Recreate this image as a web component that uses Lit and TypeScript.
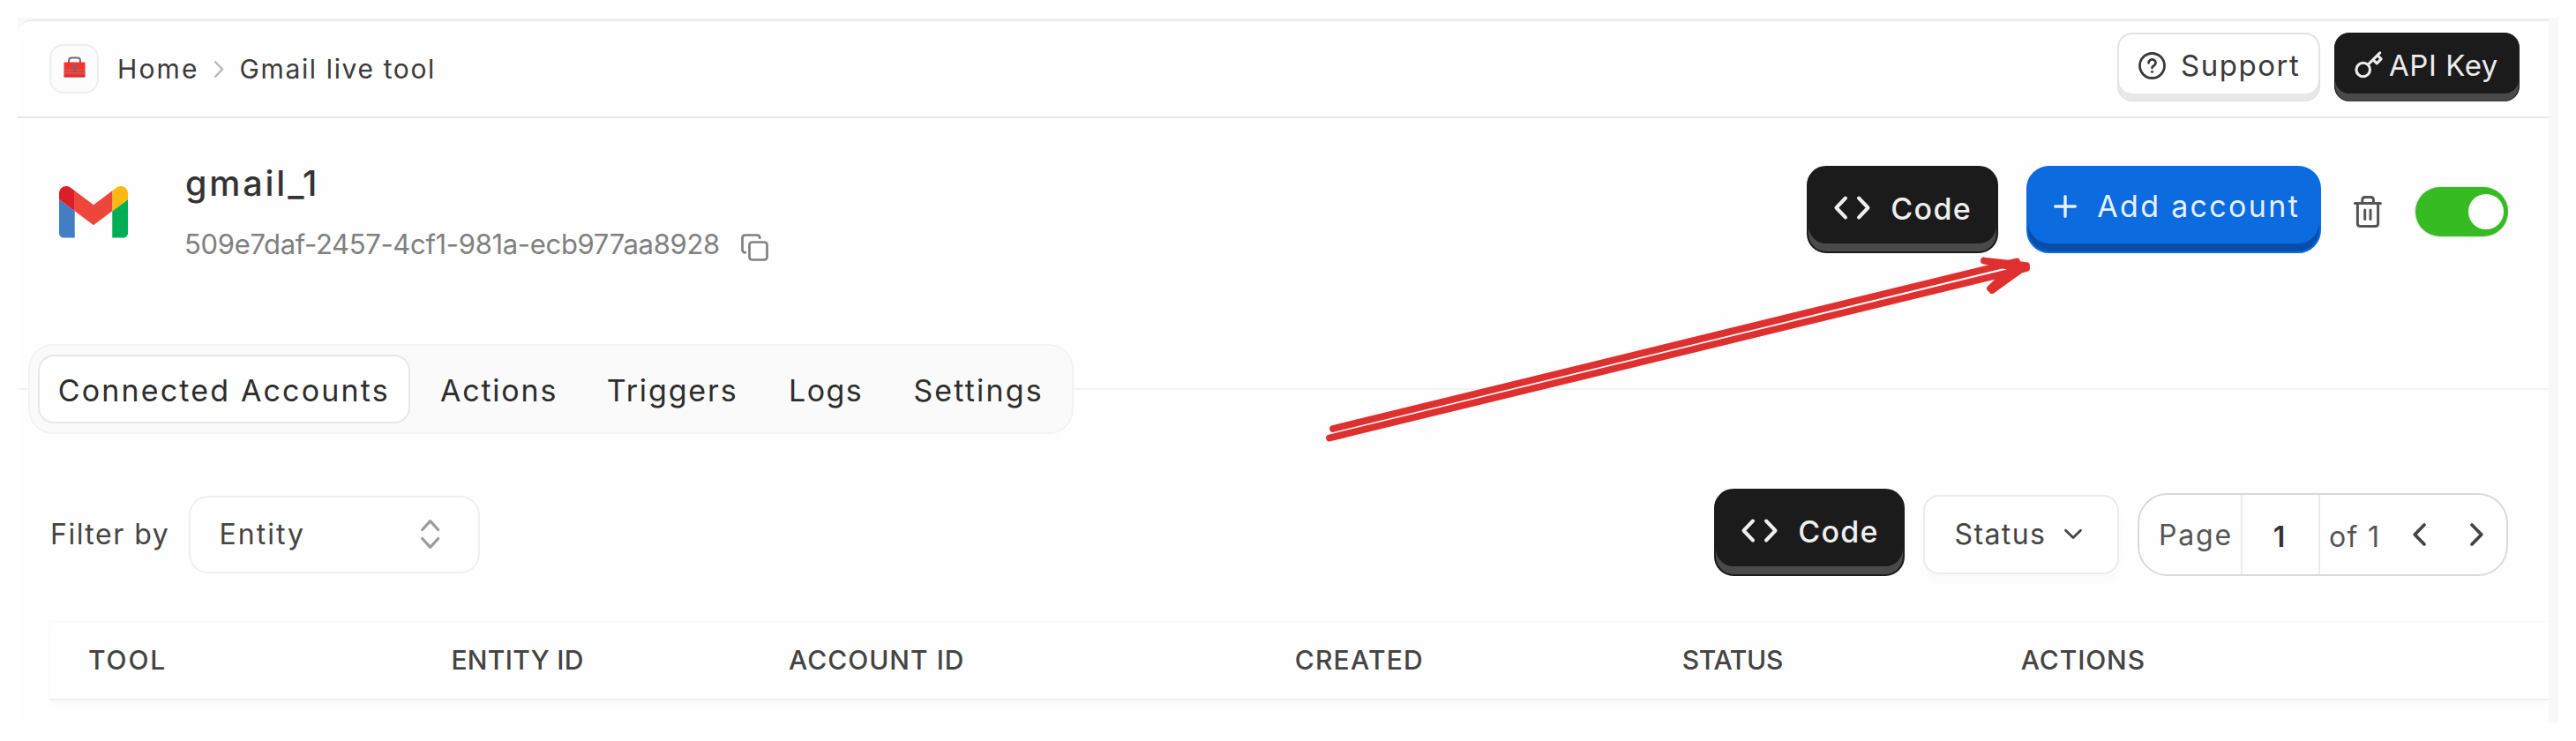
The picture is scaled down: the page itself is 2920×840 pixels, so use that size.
import { LitElement, html, css, svg } from "lit";
import { customElement } from "lit/decorators.js";

const codeIcon = () => html`<svg class="code-icon" width="41" height="27" viewBox="0 0 41 27" fill="none" stroke="currentColor" stroke-width="4" stroke-linecap="round" stroke-linejoin="round"><path d="M13 2.5 2.500 13.500 13 24.500M28 2.500l10.500 11L28 24.500" /></svg>`;

const chevron = (cls: string, w: number, h: number, d: string, sw: number) =>
  html`<svg class=${cls} width=${w} height=${h} viewBox="0 0 ${w} ${h}" fill="none" stroke="currentColor" stroke-width=${sw} stroke-linecap="round" stroke-linejoin="round">${svg`<path d=${d} />`}</svg>`;

@customElement("app-root")
export class AppRoot extends LitElement {
  static styles = css`
    :host {
      display: block;
      box-sizing: border-box;
      width: 2920px;
      height: 840px;
      padding: 20px;
      background: #fff;
      overflow: hidden;
      position: relative;
      font-family: Inter, "Liberation Sans", sans-serif;
      color: #444;
      white-space: nowrap;
    }
    *, *::before, *::after { box-sizing: border-box; }
    svg { display: block; flex: none; overflow: visible; }
    .frame { width: 2880px; height: 800px; padding: 2px 11px 0 0; background: #f8f8f8; }
    .panel { height: 798px; background: #fefefe; border-top-left-radius: 16px; overflow: hidden; }

    /* top bar */
    .topbar {
      display: flex; align-items: center; height: 112px; padding: 0 33px 0 36px;
      border-top: 2px solid #e9e9e9; border-bottom: 2px solid #e7e7e7; border-top-left-radius: 16px;
    }
    .home-logo {
      display: flex; align-items: center; justify-content: center; width: 56px; height: 56px;
      border: 2px solid #eee; border-radius: 16px; background: #fcfcfc; padding-bottom: 5px;
    }
    .crumb { font-size: 30px; line-height: 40px; color: #3a3a3a; }
    .crumb-home { margin-left: 21px; letter-spacing: 2.15px; }
    .crumb-sep { margin-left: 17.3px; color: #b5b5b5; }
    .crumb-here { margin-left: 18.5px; letter-spacing: 1.64px; }
    .btn { display: flex; align-items: center; flex: none; line-height: 40px; }
    .support {
      width: 230px; height: 78px; margin: 0 16px 5px auto; padding: 0 0 3px 22.4px;
      border: 2px solid #e3e3e3; border-radius: 17px; background: #fff; color: #3a3a3a;
      box-shadow: inset 0 -7px 0 #e8e8e8; font-size: 33px; letter-spacing: 1.51px;
    }
    .support span { margin-left: 16.7px; }
    .apikey {
      width: 210px; height: 78px; margin-bottom: 5px; padding: 0 0 3px 21px;
      border: 1px solid #1b1b1b; border-bottom-color: #3c3c3c; border-radius: 17px; background: #1b1b1b; color: #ececec;
      box-shadow: inset 0 -8px 0 #4a4a4a; font-size: 33px; letter-spacing: .56px;
    }
    .apikey span { margin-left: 6px; }

    /* tool summary */
    .summary { display: flex; align-items: center; height: 212px; padding: 0 46.5px; }
    .identity { margin-left: 65.5px; }
    .name { font-size: 39.5px; font-weight: 500; line-height: 48px; letter-spacing: 2.8px; color: #333; padding-top: 1px; }
    .uid { display: flex; align-items: center; height: 40px; margin: 24.5px 0 0 -1px; font-size: 31px; letter-spacing: -.33px; color: #808080; }
    .uid svg { margin: 8px 0 0 24.2px; }
    .dark {
      width: 216.7px; height: 99.3px; padding: 0 0 3px 29.5px; border: 2px solid #1b1b1b; border-radius: 22px;
      background: #1b1b1b; box-shadow: inset 0 -9px 0 #4a4a4a; color: #efefef; font-size: 34px; font-weight: 500; letter-spacing: 1.3px;
    }
    .dark svg { margin-bottom: 1px; }
    .dark span { margin-left: 23px; padding-top: 2px; }
    .summary .dark { margin: 0 32.3px 5.4px auto; }
    .add {
      width: 334.4px; height: 99.3px; margin-bottom: 5.4px; padding: 0 0 6px 29px; border: 2px solid #0b6bdf; border-radius: 26px;
      background: #0b6bdf; box-shadow: inset 0 -9px 0 #054fab; color: #e6f0ff; font-size: 34px; letter-spacing: 2.33px;
    }
    .add span { margin-left: 23.4px; }
    .trash { margin-left: 36.3px; color: #555; }
    .toggle {
      display: flex; align-items: center; justify-content: flex-end; width: 104.5px; height: 56px; margin-left: 38.5px;
      padding-right: 5px; border-radius: 28px; background: #36bb22; box-shadow: 0 0 3px rgba(40, 60, 40, .25);
    }
    .knob { width: 39.5px; height: 39.5px; border-radius: 50%; background: #fff; }

    /* tabs */
    .tabrow { display: flex; align-items: center; margin-top: 44px; }
    .rule { height: 2px; background: #f3f3f3; }
    .rule-start { width: 12px; }
    .rule-end { flex: 1; }
    .tabs {
      display: flex; align-items: center; width: 1185px; height: 101.7px; padding-left: 9.3px;
      border: 2px solid #f3f3f3; border-radius: 28px; background: #fafafa; color: #2d2d2d; font-size: 34px;
    }
    .tab { flex: none; height: 77.7px; padding: 4px 0 0 33.7px; line-height: 74.7px; }
    .tab-accounts { width: 422px; padding: 2px 0 0 20.5px; border: 2px solid #e8e8e8; border-radius: 18px; background: #fff; letter-spacing: 2.15px; }
    .tab-actions { width: 188.8px; letter-spacing: 1.78px; }
    .tab-triggers { width: 206.3px; letter-spacing: 1.86px; }
    .tab-logs { width: 141.3px; letter-spacing: 1.38px; }
    .tab-settings { letter-spacing: 2.17px; }

    /* filters */
    .filters { display: flex; align-items: center; height: 100px; margin-top: 64.3px; padding: 0 45.6px 0 37px; font-size: 32px; }
    .filter-label { width: 157.3px; letter-spacing: 1.5px; }
    .select {
      display: flex; align-items: center; justify-content: space-between; width: 329.4px; height: 88.6px; padding: 0 43.7px 0 32.3px;
      border: 2px solid #efefef; border-radius: 22px; letter-spacing: 1.99px;
    }
    .select svg { color: #9b9b9b; }
    .filters .dark { margin: 0 21px 5.6px auto; }
    .status {
      display: flex; align-items: center; justify-content: space-between; width: 221.7px; height: 89.3px; padding: 0 40px 0 33.2px; margin-right: 20.5px;
      border: 2px solid #ebebeb; border-radius: 18px; background: #fff; box-shadow: 0 8px 12px rgba(0, 0, 0, .02); letter-spacing: 1.4px;
    }
    .pager {
      display: flex; align-items: center; width: 420.9px; height: 93.4px; border: 2.5px solid #d9d9d9; border-radius: 34px; color: #555; overflow: hidden;
    }
    .cell { display: flex; flex: none; align-items: center; height: 100%; border-right: 2px solid #ececec; }
    .cell-label { width: 117px; padding: 2px 0 0 22.5px; letter-spacing: 1.79px; }
    .cell-num { width: 88px; padding: 6px 2px 0 0; justify-content: center; font-weight: 600; color: #333; }
    .of { margin: 6px 0 0 10.5px; letter-spacing: 1.3px; }
    .prev { margin-left: auto; color: #444; }
    .next { margin: 0 26px 0 50.5px; color: #444; }

    /* table header */
    .thead {
      display: grid; grid-template-columns: 411.4px 382.6px 573.7px 439px 384px 1fr; align-items: center; height: 90px;
      margin: 48px 0 0 36px; padding: 0 0 1px 43px; border: 1px solid #fafafa; border-right: 0; border-bottom: 2px solid #f0f0f0;
      box-shadow: 0 4px 6px rgba(0, 0, 0, .025); font-size: 30px; font-weight: 500; color: #444;
    }
    .c-tool { letter-spacing: 1.9px; }
    .c-entity { letter-spacing: .35px; }
    .c-account { letter-spacing: 1px; }
    .c-created { letter-spacing: 1.25px; }
    .c-status { letter-spacing: -.3px; }
    .c-actions { letter-spacing: .9px; }

    /* hand-drawn arrow lying over the page */
    .arrow { position: absolute; left: 1480px; top: 280px; pointer-events: none; }
  `;

  render() {
    return html`
      <div class="frame"><main class="panel">
        <header class="topbar">
          <div class="home-logo">
            <svg width="25" height="24" viewBox="0 0 25 24">
              <path d="M6 7.500V5q0-3.400 3.400-3.400h6.200Q19 1.600 19 5v2.500" fill="none" stroke="#6e6e6e" stroke-width="2" />
              <rect x=".5" y="6.500" width="24" height="17" rx="1.200" fill="#f8312f" />
              <path d="M.5 15.300h24M.5 18.700h24" stroke="#b9625f" stroke-width="1.500" />
              <path d="M.5 21.300h24v1q0 1.200-1.200 1.200H1.700q-1.200 0-1.200-1.200z" fill="#d3322f" />
              <rect x="11" y="9" width="3.200" height="7" rx="1" fill="#6b6b6b" />
            </svg>
          </div>
          <span class="crumb crumb-home">Home</span>
          ${chevron("crumb-sep", 10, 19, "M1 1 9 9.500 1 18", 2.2)}
          <span class="crumb crumb-here">Gmail live tool</span>
          <div class="btn support">
            <svg width="31" height="31" viewBox="0 0 31 31" fill="none" stroke="currentColor" stroke-width="2.800" stroke-linecap="round">
              <circle cx="15.500" cy="15.500" r="14" />
              <path d="M11.500 12.300a4 3.800 0 1 1 6.300 3q-2.300 1.300-2.300 2.600" />
              <circle cx="15.500" cy="22.300" r=".6" stroke-width="2" />
            </svg>
            <span>Support</span>
          </div>
          <div class="btn apikey">
            <svg width="34" height="34" viewBox="0 0 24 24" fill="none" stroke="currentColor" stroke-width="2.200" stroke-linecap="round" stroke-linejoin="round">
              <path d="m21 2-2 2m-7.610 7.610a5.500 5.500 0 1 1-7.778 7.778 5.500 5.500 0 0 1 7.777-7.777zm0 0L15.500 7.500m0 0 3 3L22 7l-3-3m-3.500 3.500L19 4" />
            </svg>
            <span>API Key</span>
          </div>
        </header>

        <section class="summary">
          <svg width="78" height="58.500" viewBox="52 42 88 66">
            <path fill="#437ec4" d="M58 108h14V74L52 59v43c0 3.320 2.690 6 6 6" />
            <path fill="#00ae56" d="M120 108h14c3.320 0 6-2.690 6-6V59l-20 15" />
            <path fill="#fdb813" d="M120 48v26l20-15v-8c0-7.420-8.470-11.650-14.400-7.200" />
            <path fill="#ef463c" d="M72 74V48l24 18 24-18v26L96 92" />
            <path fill="#dc1f26" d="M52 51v8l20 15V48l-5.600-4.200c-5.940-4.450-14.400-.22-14.400 7.200" />
          </svg>
          <div class="identity">
            <div class="name">gmail_1</div>
            <div class="uid">
              <span>509e7daf-2457-4cf1-981a-ecb977aa8928</span>
              <svg width="31" height="31" viewBox="0 0 31 31" fill="none" stroke="currentColor" stroke-width="2.700" stroke-linecap="round">
                <rect x="9.500" y="9.500" width="20" height="20" rx="3" />
                <path d="M4.800 21.300q-3.300 0-3.300-3.300V4.800q0-3.300 3.300-3.300H18q3.300 0 3.300 3.300" />
              </svg>
            </div>
          </div>
          <div class="btn dark">${codeIcon()}<span>Code</span></div>
          <div class="btn add">
            <svg width="26" height="26" viewBox="0 0 26 26" stroke="currentColor" stroke-width="3.400" stroke-linecap="round"><path d="M13 1.700v22.600M1.700 13h22.600" /></svg>
            <span>Add account</span>
          </div>
          <svg class="trash" width="32" height="36" viewBox="0 0 32 36" fill="none" stroke="currentColor" stroke-width="3" stroke-linecap="round">
            <path d="M1.400 8.500h29M9.800 8V4.600q0-3 3-3h6.600q3 0 3 3V8M4.400 9v22.400q0 3.200 3.200 3.200h16.800q3.200 0 3.200-3.200V9M12.700 16v10.500M19 16v10.500" />
          </svg>
          <div class="toggle"><div class="knob"></div></div>
        </section>

        <nav class="tabrow">
          <div class="rule rule-start"></div>
          <div class="tabs">
            <div class="tab tab-accounts">Connected Accounts</div>
            <div class="tab tab-actions">Actions</div>
            <div class="tab tab-triggers">Triggers</div>
            <div class="tab tab-logs">Logs</div>
            <div class="tab tab-settings">Settings</div>
          </div>
          <div class="rule rule-end"></div>
        </nav>

        <section class="filters">
          <span class="filter-label">Filter by</span>
          <div class="select">
            <span>Entity</span>
            ${chevron("", 21.5, 33, "M1.700 11.500 10.700 1.700l9 9.800M1.700 21.500l9 9.800 9-9.800", 3.2)}
          </div>
          <div class="btn dark">${codeIcon()}<span>Code</span></div>
          <div class="status"><span>Status</span>${chevron("", 20, 11, "M1.500 1.200 10 9.500l8.500-8.300", 2.8)}</div>
          <div class="pager">
            <div class="cell cell-label">Page</div>
            <div class="cell cell-num">1</div>
            <span class="of">of 1</span>
            ${chevron("prev", 15, 26, "M13 2 2.200 13 13 24", 3.8)}
            ${chevron("next", 15, 26, "M2 2l10.800 11L2 24", 3.8)}
          </div>
        </section>

        <div class="thead">
          <span class="c-tool">TOOL</span>
          <span class="c-entity">ENTITY ID</span>
          <span class="c-account">ACCOUNT ID</span>
          <span class="c-created">CREATED</span>
          <span class="c-status">STATUS</span>
          <span class="c-actions">ACTIONS</span>
        </div>
      </main></div>

      <svg class="arrow" width="860" height="230" viewBox="0 0 860 230" fill="none" stroke="#df3030" stroke-width="7.800" stroke-linecap="round" stroke-linejoin="round">
        <path d="M31 206 806 16.500M27 216.500 817 24" />
        <path d="M769 15.500 817 21 778 49M769 15.500l38 9M776 47l18-17 19-5M790 19l18 5" />
      </svg>
    `;
  }
}
